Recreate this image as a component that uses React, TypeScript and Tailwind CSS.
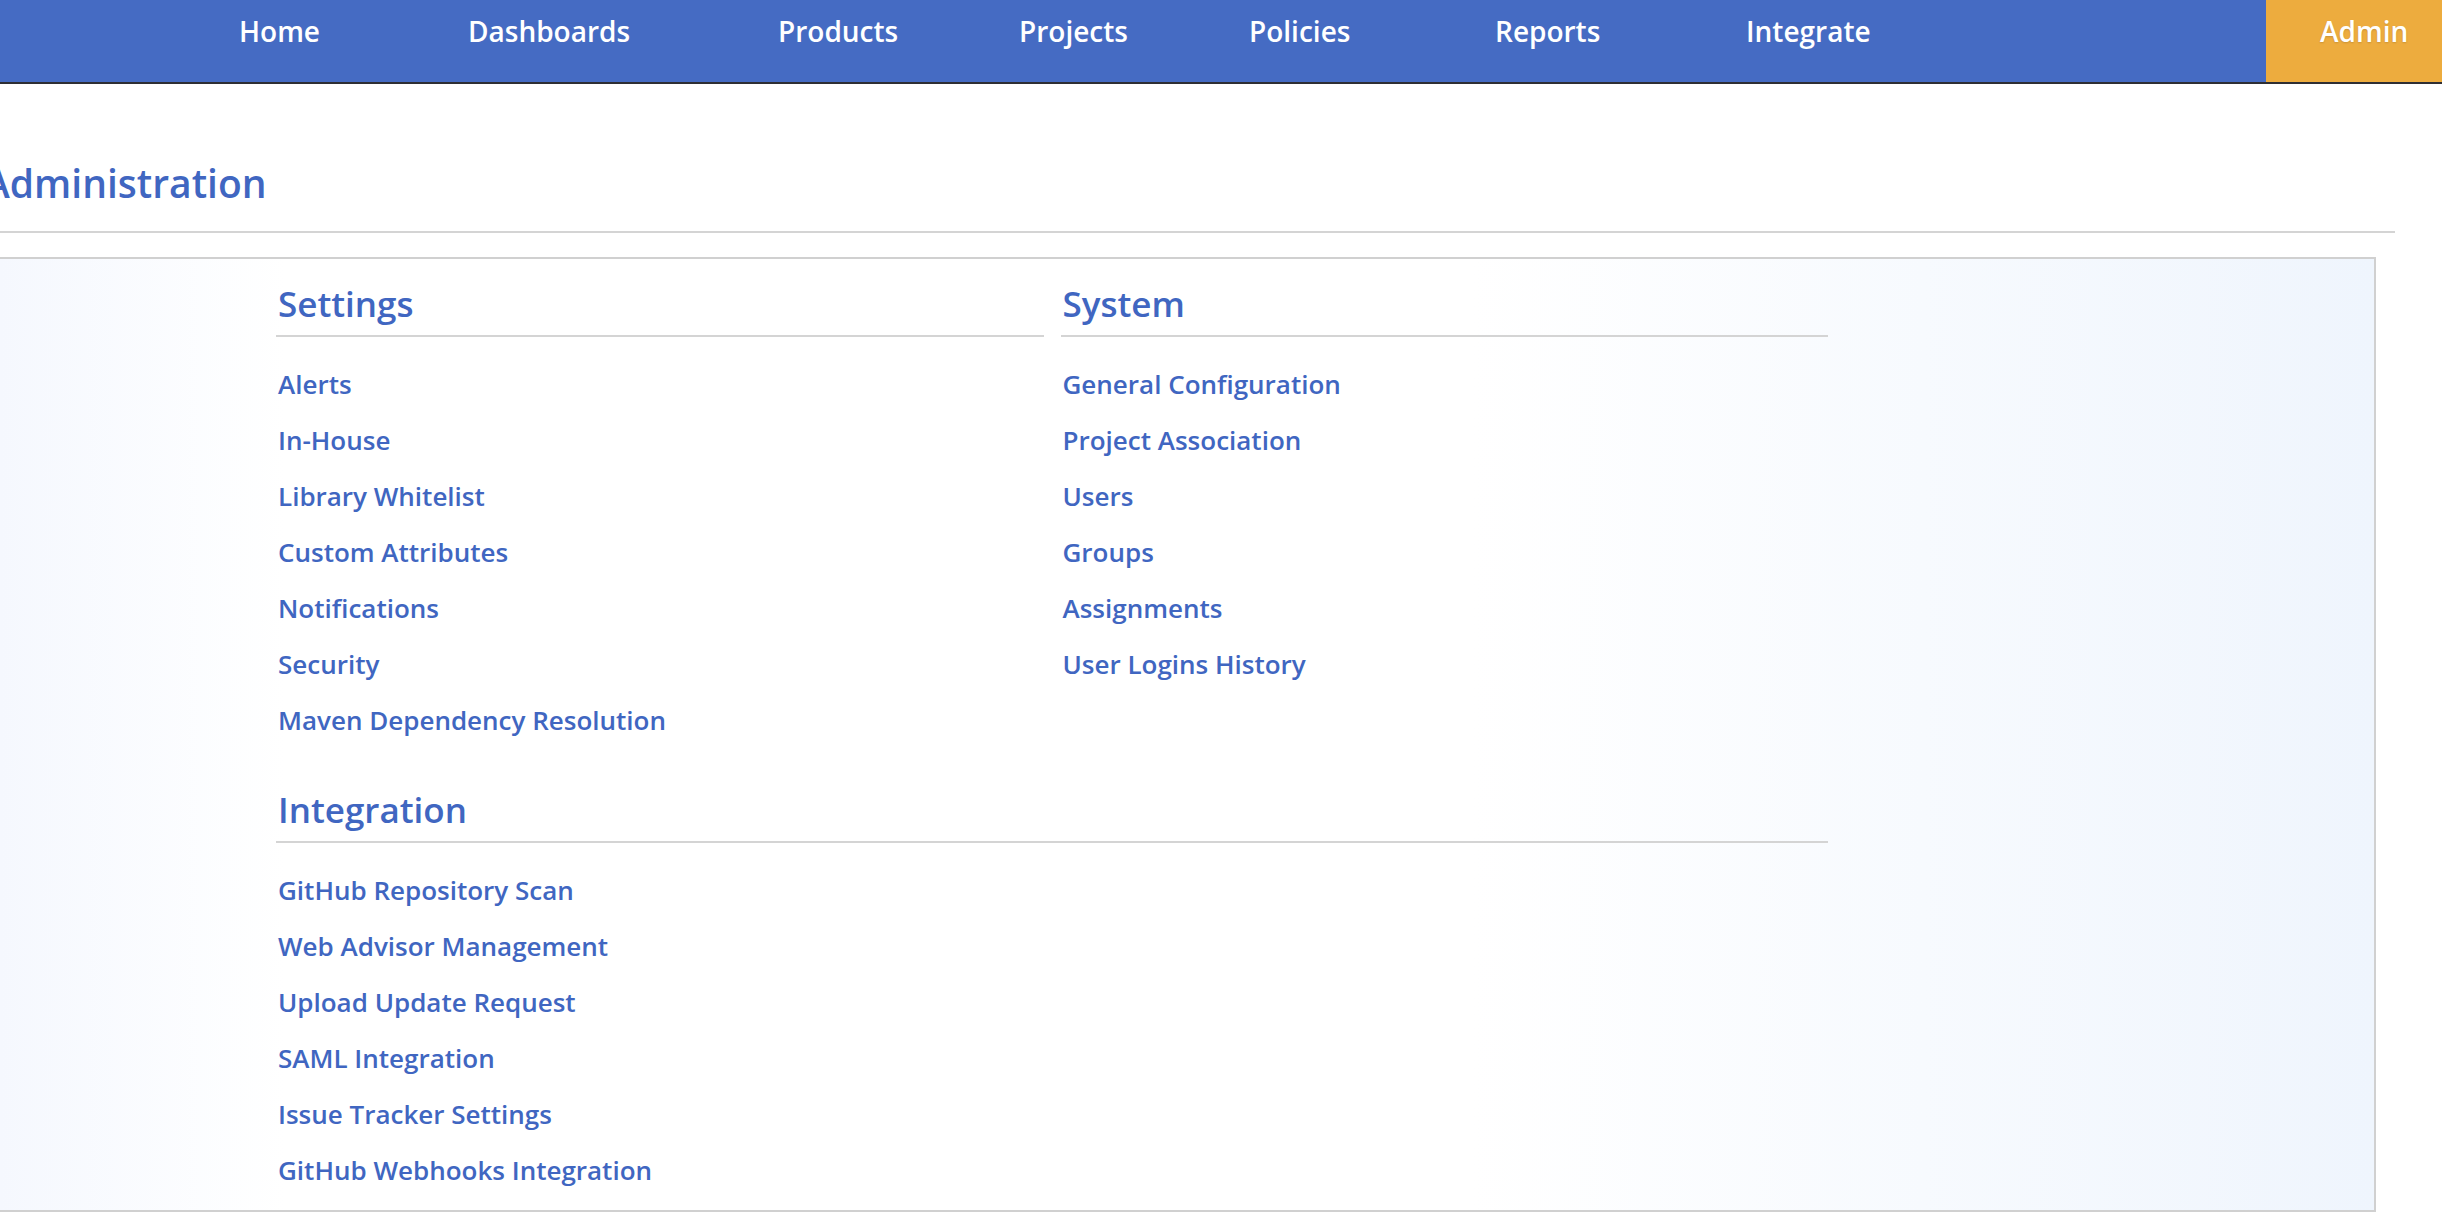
import React from "react";

const navItems: { label: string; w: string }[] = [
  { label: "Home", w: "w-[229px]" },
  { label: "Dashboards", w: "w-[310px]" },
  { label: "Products", w: "w-[241px]" },
  { label: "Projects", w: "w-[230px]" },
  { label: "Policies", w: "w-[246px]" },
  { label: "Reports", w: "w-[251px]" },
  { label: "Integrate", w: "w-[200px]" },
];

const settings = [
  "Alerts",
  "In-House",
  "Library Whitelist",
  "Custom Attributes",
  "Notifications",
  "Security",
  "Maven Dependency Resolution",
];

const system = [
  "General Configuration",
  "Project Association",
  "Users",
  "Groups",
  "Assignments",
  "User Logins History",
];

const integration = [
  "GitHub Repository Scan",
  "Web Advisor Management",
  "Upload Update Request",
  "SAML Integration",
  "Issue Tracker Settings",
  "GitHub Webhooks Integration",
];

function Section({ title, links }: { title: string; links: string[] }) {
  return (
    <div className="flex flex-col">
      <h2 className="text-[35px] leading-[46px] font-semibold text-[#4066c1] pb-[8px] border-b-2 border-[#d4d4d4] pl-[2px]">
        {title}
      </h2>
      <ul className="flex flex-col pt-[19px] pl-[2px]">
        {links.map((l) => (
          <li key={l} className="h-[56px] leading-[56px] text-[26px] font-semibold text-[#4066c1]">
            <a href="#" className="cursor-pointer">{l}</a>
          </li>
        ))}
      </ul>
    </div>
  );
}

export default function App() {
  return (
    <div
      className="w-[2442px] min-h-[1232px] bg-white overflow-hidden"
      style={{ fontFamily: '"Open Sans", "Noto Sans", sans-serif' }}
    >
      {/* Nav */}
      <nav className="flex h-[84px] bg-[#456bc3] border-b-2 border-[#2e2e33]">
        <div className="flex pl-[239px] pt-[12px]">
          {navItems.map((n) => (
            <div key={n.label} className={`${n.w} text-[28px] leading-[38px] font-semibold text-white`}>
              {n.label}
            </div>
          ))}
        </div>
        <div className="ml-auto w-[176px] h-[82px] bg-[#edac3e] pl-[54px] pt-[12px] text-[28px] leading-[38px] font-semibold text-white [text-shadow:0_1px_2px_rgba(0,0,0,0.15)]">
          Admin
        </div>
      </nav>

      {/* Title */}
      <div className="pt-[72px]">
        <h1 className="-ml-[16px] text-[39px] leading-[54px] font-semibold text-[#4066c1]">
          Administration
        </h1>
        <div className="mt-[21px] w-[2395px] h-[2px] bg-[#d4d4d4]" />
      </div>

      {/* Panel */}
      <div className="mt-[24px] w-[2376px] border-2 border-l-0 border-[#d0d0d0] bg-[linear-gradient(to_right,#f5f8fe_0%,#ffffff_12%,#ffffff_62%,#eff5fd_100%)] pt-[22px] pb-[12px] pl-[276px]">
        <div className="w-[1552px] flex flex-col gap-[39px]">
          <div className="grid grid-cols-2 gap-x-[17px]">
            <Section title="Settings" links={settings} />
            <Section title="System" links={system} />
          </div>
          <Section title="Integration" links={integration} />
        </div>
      </div>
    </div>
  );
}
